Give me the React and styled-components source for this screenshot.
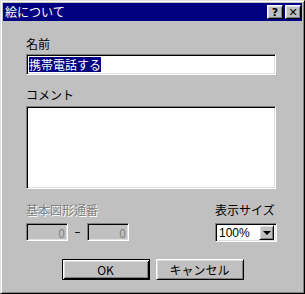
import * as React from 'react'
import styled, { createGlobalStyle, css } from 'styled-components'

const GlobalStyle = createGlobalStyle`
	html, body {
		margin: 0;
		padding: 0;
		background: #c0c0c0;
	}
	body {
		font-family: "Noto Sans CJK JP", "DejaVu Sans", sans-serif;
		font-size: 12px;
	}
`

const sunken = css`
	box-sizing: border-box;
	border: 1px solid;
	border-color: #808080 #ffffff #ffffff #808080;
	box-shadow: inset 1px 1px #000000, inset -1px -1px #dfdfdf;
`

const raised = css`
	box-sizing: border-box;
	border: 1px solid;
	border-color: #ffffff #000000 #000000 #ffffff;
	box-shadow: inset 1px 1px #dfdfdf, inset -1px -1px #808080;
`

const Window = styled('div')({
	width: 305,
	height: 294,
	boxSizing: 'border-box',
	background: '#c0c0c0',
	border: '1px solid',
	borderColor: '#dfdfdf #000000 #000000 #dfdfdf',
	boxShadow: 'inset 1px 1px #ffffff, inset -1px -1px #808080',
	padding: 2,
	display: 'flex',
	flexDirection: 'column',
})

const TitleBar = styled('div')({
	height: 18,
	background: '#000080',
	display: 'flex',
	alignItems: 'center',
	padding: '0 1px 0 2px',
	color: '#ffffff',
})

const TitleText = styled('span')({
	flex: 1,
	fontSize: 12,
	lineHeight: '14px',
})

const TitleButton = styled('div')`
	${raised};
	width: 16px;
	height: 14px;
	background: #c0c0c0;
	display: flex;
	align-items: center;
	justify-content: center;
	margin-left: ${p => p.$gap || 0}px;
	color: #000;
	font-family: "DejaVu Sans", sans-serif;
	font-weight: bold;
	font-size: 11px;
	line-height: 1;
`

const Body = styled('div')({
	flex: 1,
	display: 'flex',
	flexDirection: 'column',
	padding: '16px 26px 0 23px',
})

const Label = styled('div')`
	height: 14px;
	line-height: 14px;
	font-size: 12px;
	color: ${p => (p.$disabled ? '#808080' : '#000000')};
	text-shadow: ${p => (p.$disabled ? '1px 1px #ffffff' : 'none')};
	margin-bottom: ${p => p.$gap}px;
`

const TextField = styled('div')`
	${sunken};
	height: ${p => p.$height}px;
	width: ${p => p.$width ? p.$width + 'px' : 'auto'};
	background: ${p => (p.$disabled ? '#c0c0c0' : '#ffffff')};
	padding: 2px;
	display: flex;
	align-items: ${p => (p.$multi ? 'flex-start' : 'center')};
	justify-content: ${p => (p.$right ? 'flex-end' : 'flex-start')};
	color: ${p => (p.$disabled ? '#808080' : '#000000')};
	margin-bottom: ${p => p.$gap || 0}px;
`

const Selected = styled('span')({
	background: '#000080',
	color: '#ffffff',
	lineHeight: '15px',
	height: 15,
	fontSize: 12,
})

const BottomRow = styled('div')({
	display: 'flex',
	justifyContent: 'space-between',
	marginTop: 14,
})

const Group = styled('div')({
	display: 'flex',
	flexDirection: 'column',
})

const FieldRow = styled('div')({
	display: 'flex',
	alignItems: 'center',
	marginTop: 6,
})

const Dash = styled('span')({
	width: 19,
	textAlign: 'center',
	color: '#000000',
	fontFamily: '"DejaVu Sans", sans-serif',
})

const Select = styled('div')`
	${sunken};
	width: 62px;
	height: 19px;
	margin-top: 6px;
	margin-right: -1px;
	background: #ffffff;
	display: flex;
	align-items: center;
	padding: 2px;
	font-family: "Liberation Sans", sans-serif;
	font-size: 12px;
`

const SelectValue = styled('span')({
	flex: 1,
	paddingLeft: 1,
})

const DropButton = styled('div')`
	${raised};
	width: 15px;
	height: 15px;
	background: #c0c0c0;
	display: flex;
	align-items: center;
	justify-content: center;
`

const Arrow = styled('div')({
	width: 0,
	height: 0,
	borderLeft: '4px solid transparent',
	borderRight: '4px solid transparent',
	borderTop: '4px solid #000000',
})

const ButtonRow = styled('div')({
	display: 'flex',
	justifyContent: 'center',
	gap: 6,
	marginTop: 17,
	marginLeft: -23,
	marginRight: -26,
})

const Button = styled('div')`
	width: 88px;
	height: 21px;
	box-sizing: border-box;
	background: #c0c0c0;
	display: flex;
	align-items: center;
	justify-content: center;
	font-size: 12px;
	color: #000000;
	${p => p.$default
		? css`
			border: 1px solid #000000;
			box-shadow: inset 1px 1px #ffffff, inset -1px -1px #000000, inset 2px 2px #dfdfdf, inset -2px -2px #808080;
		`
		: raised};
`

const App = () => {
	return (
		<>
			<GlobalStyle />
			<Window>
				<TitleBar>
					<TitleText>絵について</TitleText>
					<TitleButton>?</TitleButton>
					<TitleButton $gap={2}>✕</TitleButton>
				</TitleBar>
				<Body>
					<Label $gap={3}>名前</Label>
					<TextField $height={21}>
						<Selected>携帯電話する</Selected>
					</TextField>
					<Label $gap={4} style={{ marginTop: 13 }}>コメント</Label>
					<TextField $height={83} $multi />
					<BottomRow>
						<Group>
							<Label $disabled>基本図形通番</Label>
							<FieldRow>
								<TextField $height={18} $width={42} $disabled $right>0</TextField>
								<Dash>–</Dash>
								<TextField $height={18} $width={42} $disabled $right>0</TextField>
							</FieldRow>
						</Group>
						<Group>
							<Label>表示サイズ</Label>
							<Select>
								<SelectValue>100%</SelectValue>
								<DropButton>
									<Arrow />
								</DropButton>
							</Select>
						</Group>
					</BottomRow>
					<ButtonRow>
						<Button $default>OK</Button>
						<Button>キャンセル</Button>
					</ButtonRow>
				</Body>
			</Window>
		</>
	)
}

export default App
